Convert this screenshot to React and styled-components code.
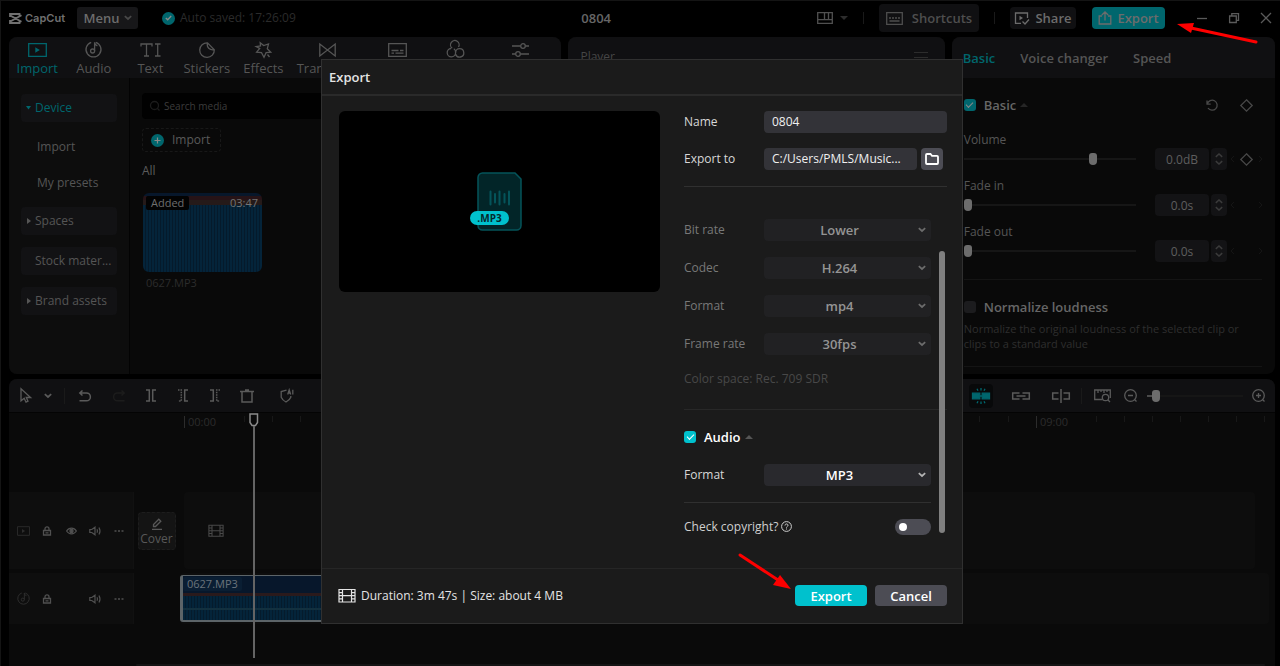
import React from "react";
import styled, { createGlobalStyle, css } from "styled-components";

const Global = createGlobalStyle`
  *, *::before, *::after { box-sizing: border-box; }
  html, body { margin: 0; background: #000; }
  body, button, input, select {
    font-family: "Open Sans", "Noto Sans", sans-serif;
    font-size: 12px;
    line-height: 18px;
  }
  button, input, select { margin: 0; border: 0; padding: 0; background: none; color: inherit; outline: none; }
  button { white-space: nowrap; }
  h1, h2, p { margin: 0; font-size: 13px; font-weight: 600; }
`;

const strong = css`
  font-size: 13px;
  font-weight: 600;
`;

const teal = "#00c1cd";
const dimTeal = "#00666d";
const dim = "#5c5c5c";

const Svg = styled.svg`
  display: block;
  flex: none;
  fill: none;
  stroke: currentColor;
  stroke-width: ${(p) => p.$weight || 1.3};
  overflow: visible;
`;
const Icon = ({ w = 16, h = 16, weight, children }) => (
  <Svg width={w} height={h} viewBox={`0 0 ${w} ${h}`} $weight={weight} aria-hidden="true">
    {children}
  </Svg>
);

/* ---------- icons ---------- */
const ChevronDown = () => (
  <Icon w={8} h={6} weight={1.7}><path d="M.8 1.200 4 4l3.200-2.800" /></Icon>
);
const CaretUp = () => (
  <Icon w={8} h={4}><path d="M0 4 4 0l4 4z" fill="currentColor" stroke="none" /></Icon>
);
const CaretDown = () => (
  <Icon w={8} h={4}><path d="M0 0h8L4 4z" fill="currentColor" stroke="none" /></Icon>
);
const Film = ({ w = 16, h = 13 }) => (
  <Svg width={w} height={h} viewBox="0 0 18 14" $weight={1.2} aria-hidden="true">
    <path d="M1 1h16v12.500H1zM4.500 1v12.500M13.500 1v12.500M4.500 7.200h9M1 4.100h3.500M1 7.200h3.500M1 10.300h3.500M13.500 4.100H17M13.500 7.200H17M13.500 10.300H17" />
  </Svg>
);
const Lock = () => (
  <Icon w={10} h={10}><path d="M1.500 4.500h7v4.500h-7zM3 4.500V2.800a2 2 0 0 1 4 0v1.700M3.500 6.800h3" /></Icon>
);
const Eye = () => (
  <Icon w={11} h={10} weight={1.2}><path d="M.6 5C3 1.200 8 1.200 10.400 5 8 8.800 3 8.800.6 5z" /><circle cx="5.500" cy="5" r="1.600" fill="currentColor" /></Icon>
);
const Speaker = () => (
  <Icon w={12} h={10} weight={1.2}><path d="M.8 3.500h2L6 1.200v7.600L2.800 6.500h-2zM8 3.200q1 1.800 0 3.600M10 1.500q2 3.500 0 7" /></Icon>
);
const Dots = () => (
  <Icon w={10} h={10}><path d="M.5 4.300h2v1.400h-2zM4 4.300h2v1.400H4zM7.500 4.300h2v1.400h-2z" fill="currentColor" stroke="none" /></Icon>
);
const Note = ({ size = 17 }) => (
  <Svg width={size} height={size} viewBox="0 0 17 17" $weight={1.3} aria-hidden="true">
    <path d="M10.800 1.300A7.500 7.500 0 1 1 6.200 1.300" /><circle cx="7.600" cy="10" r="2" /><path d="M9.600 10V1.200c0 2 1 3 2.800 3.600" />
  </Svg>
);
const PlayBox = ({ w = 19, h = 14 }) => (
  <Svg width={w} height={h} viewBox="0 0 19 14" $weight={1.3} aria-hidden="true">
    <path d="M.7.700h17.600v12.600H.7z" /><path d="M7.300 4.200v5.600l4.500-2.800z" fill="currentColor" stroke="none" />
  </Svg>
);
const Diamond = () => <Icon w={13} h={13}><path d="m6.500.8 5.700 5.700-5.700 5.700L.8 6.500z" /></Icon>;

/* ---------- frame ---------- */
const Page = styled.div`
  position: relative;
  display: flex;
  flex-direction: column;
  min-height: 100vh;
  padding: 0 5px 0 8px;
  border-top: 1px solid #141414;
  border-left: 1px solid #141414;
  background: #000;
  color: ${dim};
`;
const Header = styled.header`
  display: flex;
  align-items: center;
  height: 36px;
  padding: 0 4px 2px 0;
`;
const HeaderStart = styled.div`
  display: flex;
  flex: 1;
  align-items: center;
`;
const Logo = styled.div`
  display: flex;
  align-items: center;
  gap: 3px;
  width: 68px;
  font: 600 11px/14px "Inter", sans-serif;
  color: #707070;
`;
const MenuButton = styled.button`
  display: flex;
  align-items: center;
  justify-content: center;
  gap: 4px;
  width: 61px;
  height: 22px;
  border-radius: 3px;
  background: #171719;
  color: #6c6c6c;
  ${strong}
  svg { color: #484848; }
`;
const Saved = styled.div`
  display: flex;
  align-items: center;
  gap: 5px;
  margin-left: 24px;
  color: #2b2b2b;
  white-space: nowrap;
`;
const Round = styled.span`
  display: grid;
  flex: none;
  place-items: center;
  width: 13px;
  height: 13px;
  border-radius: 50%;
  background: ${dimTeal};
  color: #8a8a8a;
`;
const ProjectTitle = styled.h1`
  margin-right: 206px;
  color: #666;
`;
const HeaderEnd = styled.div`
  display: flex;
  align-items: center;
`;
const LayoutButton = styled.button`
  display: flex;
  align-items: center;
  gap: 7px;
  color: #505050;
  svg + svg { color: #2c2c2c; }
`;
const Rule = styled.span`
  width: 1px;
  height: ${(p) => p.$tall || 12}px;
  margin: 0 ${(p) => p.$gap || 15}px;
  background: #1a1a1a;
`;
const HeadButton = styled.button`
  display: flex;
  align-items: center;
  justify-content: center;
  gap: ${(p) => p.$gap || 5}px;
  width: ${(p) => p.$width}px;
  height: ${(p) => (p.$large ? 28 : 22)}px;
  border-radius: 4px;
  background: ${(p) => (p.$primary ? dimTeal : "#101012")};
  color: ${(p) => (p.$large ? "#4e4e4e" : "#6c6c6c")};
  ${strong}
  & + & { margin-left: 16px; }
`;
const WindowControls = styled.div`
  display: flex;
  align-items: center;
  gap: 22px;
  margin-left: 32px;
  color: #5a5a5a;
  button { display: grid; }
`;

/* ---------- panels ---------- */
const Workspace = styled.main`
  display: grid;
  grid-template-columns: 552fr 376fr 323fr;
  gap: 7px;
  height: 337px;
`;
const Panel = styled.section`
  display: flex;
  flex-direction: column;
  min-width: 0;
  border-radius: 8px;
  background: #090909;
  overflow: hidden;
`;
const TabBar = styled.nav`
  display: flex;
  height: 41px;
  padding-right: 5px;
  background: #101012;
`;
const Tool = styled.button`
  display: flex;
  flex-direction: column;
  flex: ${(p) => p.$grow || 57} 1 0;
  align-items: ${(p) => (p.$start ? "flex-start" : "center")};
  justify-content: space-between;
  min-width: 0;
  padding: 4px 0 1px ${(p) => (p.$start ? 5 : 0)}px;
  font-size: 13px;
  color: ${(p) => (p.$active ? dimTeal : "#555")};
`;
const ToolIcon = styled.span`
  display: grid;
  place-items: center;
  min-width: ${(p) => (p.$wide ? 62 : 0)}px;
  height: 17px;
`;
const MediaBody = styled.div`
  display: flex;
  flex: 1;
`;
const Sidebar = styled.aside`
  width: 121px;
  padding: 16px 12px;
  border-right: 1px solid #030303;
  background: #0d0d0d;
`;
const Group = styled.button`
  display: flex;
  align-items: center;
  gap: 4px;
  width: 96px;
  height: 28px;
  padding: 0 5px;
  border-radius: 4px;
  background: #121214;
  color: ${(p) => (p.$active ? dimTeal : "#555")};
  & + & { margin-top: 12px; }
`;
const GroupMark = styled.span`
  display: grid;
  flex: none;
  place-items: center;
  width: 5px;
`;
const SubItems = styled.div`
  padding: 7px 0 6px;
`;
const SubItem = styled.button`
  display: block;
  height: 36px;
  padding-left: 16px;
  color: #555;
`;
const Library = styled.div`
  flex: 1;
  padding: 15px 12px;
`;
const Search = styled.label`
  display: flex;
  align-items: center;
  gap: 4px;
  height: 26px;
  padding: 0 8px;
  border-radius: 4px;
  background: #010101;
  color: #1c1c1c;
  input { flex: 1; font-size: 10px; }
  input::placeholder { color: #3c3c3c; opacity: 1; }
`;
const ImportButton = styled.button`
  display: flex;
  align-items: center;
  gap: 8px;
  width: 79px;
  height: 24px;
  margin: 9px 0 10px;
  padding: 0 8px;
  border: 1px dashed #181818;
  border-radius: 4px;
  color: #5a5a5a;
`;
const Thumb = styled.div`
  display: flex;
  align-items: flex-start;
  justify-content: space-between;
  width: 119px;
  height: 79px;
  margin: 13px 0 2px 1px;
  padding: 3px 4px 0 3px;
  border-radius: 6px;
  background:
    linear-gradient(#07172b 3px, #261317 3px, #261317 7px, #251a19 7px, #251a19 12px, transparent 12px),
    repeating-linear-gradient(90deg, #04243a 0 2px, #051a2b 2px 3px);
  font-size: 11px;
  line-height: 14px;
  color: #747474;
`;
const Added = styled.span`
  padding: 0 5px;
  border-radius: 2px;
  background: #030303;
  color: #6e6e6e;
`;
const FileName = styled.p`
  padding-left: 4px;
  font-size: 11px;
  font-weight: 400;
  color: #2c2c2c;
`;
const PlayerHead = styled.div`
  display: flex;
  align-items: center;
  justify-content: space-between;
  height: 40px;
  padding: 0 17px 0 12px;
  background: #101012;
  color: #464646;
  svg { color: #2c2c2c; }
`;

/* ---------- inspector ---------- */
const InspectorTabs = styled(TabBar)`
  align-items: center;
  gap: 25px;
  padding: 0 11px;
`;
const InspectorTab = styled.button`
  ${strong}
  color: ${(p) => (p.$active ? dimTeal : "#555")};
`;
const InspectorBody = styled.div`
  padding: 18px 13px 0 12px;
`;
const CheckRow = styled.div`
  display: flex;
  align-items: center;
  height: 18px;
  color: ${(p) => (p.$bright ? "#fff" : "#666")};
`;
const CheckLabel = styled.label`
  display: flex;
  align-items: center;
  gap: 8px;
  ${strong}
`;
const Check = styled.input`
  display: grid;
  place-items: center;
  width: 12px;
  height: 12px;
  border-radius: 3px;
  background: #1c1c1e;
  appearance: none;
  &:checked { background: ${(p) => (p.$bright ? teal : dimTeal)}; }
  &:checked::after {
    content: "";
    width: 7px;
    height: 4px;
    margin-top: -2px;
    border: solid ${(p) => (p.$bright ? "#fff" : "#888")};
    border-width: 0 0 1px 1px;
    transform: rotate(-45deg);
  }
`;
const Collapse = styled.button`
  display: grid;
  margin-left: 4px;
  color: ${(p) => (p.$bright ? "#555" : "#262626")};
`;
const RowEnd = styled.div`
  display: flex;
  align-items: center;
  gap: 22px;
  margin: 0 9px 0 auto;
  color: #484848;
`;
const KeySet = styled.div`
  display: flex;
  align-items: center;
  justify-content: center;
  gap: 6px;
  width: 31px;
  color: #151515;
  button { display: grid; width: 13px; color: #484848; }
`;
const Field = styled.div`
  padding-top: ${(p) => (p.$first ? 17 : 8)}px;
  color: #555;
`;
const FieldRow = styled.div`
  display: flex;
  align-items: center;
  height: 20px;
`;
const Range = styled.input`
  flex: 1;
  min-width: 0;
  height: 12px;
  appearance: none;
  background: linear-gradient(#161616, #161616) center / 100% 2px no-repeat;
  &::-webkit-slider-thumb {
    width: 8px;
    height: 12px;
    border-radius: 3px 3px 4px 4px;
    background: #6c6c6c;
    appearance: none;
  }
`;
const Value = styled.input`
  width: 54px;
  height: 22px;
  margin: 0 2px 0 19px;
  border-radius: 4px;
  background: #131315;
  text-align: center;
  color: #5e5e5e;
`;
const Stepper = styled.button`
  display: grid;
  place-items: center;
  width: 16px;
  height: 22px;
  margin-right: 4px;
  border-radius: 4px;
  background: #131315;
  color: #3a3a3a;
`;
const Divider = styled.hr`
  height: 1px;
  margin: ${(p) => p.$space};
  border: 0;
  background: ${(p) => p.$color || "#141414"};
`;
const Hint = styled.p`
  margin-top: 5px;
  font-size: 11px;
  font-weight: 400;
  line-height: 15px;
  color: #2e2e2e;
`;

/* ---------- timeline ---------- */
const Timeline = styled.section`
  position: relative;
  display: flex;
  flex: 1;
  flex-direction: column;
  margin-top: 5px;
  border-radius: 8px 8px 0 0;
  background: #0a0a0a;
  overflow: hidden;
`;
const Toolbar = styled.div`
  display: flex;
  align-items: center;
  justify-content: space-between;
  height: 34px;
  padding: 0 8px 0 9px;
  border-bottom: 1px solid #040404;
  background: #101012;
`;
const Tools = styled.div`
  display: flex;
  align-items: center;
  color: #5a5a5a;
`;
const ToolButton = styled.button`
  display: grid;
  place-items: center;
  width: ${(p) => p.$width || 32}px;
  height: 24px;
  border-radius: 4px;
  background: ${(p) => (p.$active ? "#08090a" : "none")};
  color: ${(p) => (p.$active ? dimTeal : p.$off ? "#1c1c1c" : "inherit")};
`;
const ZoomRange = styled(Range)`
  flex: none;
  width: 96px;
  margin: 0 6px 0 0;
  background: linear-gradient(90deg, #4a4a4a 6px, #161616 6px) center / 100% 2px no-repeat;
`;
const Ruler = styled.div`
  display: flex;
  height: 79px;
  padding: 3px 0 0 175px;
  overflow: hidden;
`;
const Major = styled.div`
  display: grid;
  flex: none;
  grid-template-columns: repeat(10, 1fr);
  width: 284px;
  font-size: 11px;
  line-height: 12px;
  color: #2c2c2c;
`;
const Tick = styled.span`
  height: ${(p) => (p.$label ? 12 : 6)}px;
  padding-left: 3px;
  border-left: 1px solid ${(p) => (p.$hidden ? "transparent" : p.$label ? "#2c2c2c" : "#181818")};
  white-space: nowrap;
`;
const Track = styled.div`
  display: flex;
  height: ${(p) => p.$height}px;
  margin-bottom: 4px;
`;
const TrackHead = styled.div`
  display: grid;
  grid-template-columns: repeat(5, 24px);
  align-items: center;
  justify-items: center;
  width: 125px;
  padding-left: 2px;
  border-right: 1px solid #111;
  background: #0e0e0e;
  color: #505050;
  button { display: grid; }
`;
const TrackKind = styled.span`
  color: #2d2d2d;
`;
const TrackGap = styled.div`
  display: grid;
  place-items: center;
  width: ${(p) => p.$width}px;
  padding-right: 5px;
`;
const Cover = styled.button`
  display: flex;
  flex-direction: column;
  align-items: center;
  width: 38px;
  height: 38px;
  padding-top: 5px;
  border: 1px dashed #1d1d1d;
  border-radius: 4px;
  background: #141414;
  color: #585858;
`;
const Lane = styled.div`
  display: flex;
  flex: 1;
  align-items: center;
  margin-right: ${(p) => p.$inset}px;
  padding-left: ${(p) => p.$pad || 0}px;
  border-radius: 4px;
  background: #0d0d0d;
  color: #484848;
`;
const Clip = styled.div`
  width: 361px;
  height: 47px;
  padding-top: 1px;
  border: 1px solid #5c6468;
  border-width: 1px 1px 2px 3px;
  border-radius: 3px;
  background:
    linear-gradient(#07172b 17px, #2a1a1c 17px, #2a1a1c 20px, transparent 20px, transparent 32px, #12303f 32px, #12303f 34px, transparent 34px),
    repeating-linear-gradient(90deg, #04243a 0 2px, #051b2c 2px 3px);
`;
const ClipName = styled.span`
  display: inline-block;
  padding: 0 4px;
  border-radius: 2px;
  background: #0a1e33;
  font-size: 11px;
  line-height: 14px;
  color: #6a747c;
  vertical-align: top;
`;
const Playhead = styled.div`
  position: absolute;
  top: 34px;
  bottom: 8px;
  left: 240px;
  width: 9px;
  color: #8a8a8a;
  &::after {
    content: "";
    position: absolute;
    top: 13px;
    bottom: 0;
    left: 4px;
    width: 2px;
    background: #646464;
  }
`;
const ScrollTrack = styled.div`
  height: 2px;
  margin: auto 10px 0 127px;
  border-radius: 2px;
  background: #141414;
`;

/* ---------- dialog ---------- */
const Overlay = styled.div`
  position: fixed;
  inset: 0;
  display: grid;
  place-items: center;
  padding: 16px 0 0 4px;
`;
const Dialog = styled.div`
  width: min(642px, 100%);
  border: 1px solid #303030;
  background: #1b1b1b;
  color: #e4e4e4;
`;
const DialogHead = styled.header`
  height: 36px;
  padding: 8px 7px;
  border-bottom: 2px solid #2a2a2a;
`;
const DialogBody = styled.div`
  display: flex;
  gap: 24px;
  padding: 15px 15px 0 17px;
`;
const Preview = styled.div`
  display: grid;
  flex: none;
  place-items: center;
  width: 321px;
  height: 181px;
  border-radius: 6px;
  background: #000;
`;
const FileArt = styled.div`
  position: relative;
  color: #04545a;
`;
const FileTag = styled.span`
  position: absolute;
  bottom: 6px;
  left: -7px;
  width: 39px;
  height: 14px;
  border-radius: 7px;
  background: ${teal};
  font: 700 10px/14px "Open Sans", sans-serif;
  text-align: center;
  color: #042a2d;
`;
const Form = styled.form`
  flex: 1;
  min-width: 0;
`;
const FormRow = styled.div`
  display: grid;
  grid-template-columns: 80px 1fr auto;
  align-items: center;
  height: 22px;
  margin-bottom: ${(p) => (p.$tight ? 15 : 16)}px;
  color: ${(p) => (p.$dim ? "#787878" : "#d8d8d8")};
`;
const TextBox = styled.input`
  min-width: 0;
  width: 100%;
  height: 22px;
  padding: 0 8px;
  border-radius: 4px;
  background: #333338;
  text-overflow: ellipsis;
  color: #f0f0f0;
`;
const FolderButton = styled.button`
  display: grid;
  place-items: center;
  width: 22px;
  height: 22px;
  margin: 0 4px;
  border-radius: 4px;
  background: #4c4c54;
  color: #fff;
`;
const Settings = styled.div`
  position: relative;
  height: 381px;
  padding: 32px 16px 0 0;
`;
const SelectWrap = styled.div`
  position: relative;
  grid-column: 2 / 4;
  select {
    display: block;
    width: 100%;
    height: 22px;
    padding-right: 16px;
    border-radius: 4px;
    background: ${(p) => (p.$dim ? "#212123" : "#29292d")};
    text-align-last: center;
    color: ${(p) => (p.$dim ? "#949494" : "#fff")};
    opacity: 1;
    appearance: none;
    ${strong}
  }
  svg {
    position: absolute;
    top: 8px;
    right: 5px;
    color: ${(p) => (p.$dim ? "#6c6c6c" : "#b4b4b4")};
    pointer-events: none;
  }
`;
const ColorSpace = styled.p`
  margin-top: -1px;
  font-size: 12px;
  font-weight: 400;
  color: #484848;
`;
const CopyrightRow = styled.div`
  display: flex;
  align-items: center;
  gap: 3px;
  height: 18px;
  color: #cfcfcf;
`;
const Toggle = styled.input`
  width: 36px;
  height: 16px;
  margin-left: auto;
  padding: 4px;
  border-radius: 8px;
  background: #4c4c54;
  appearance: none;
  &::after {
    content: "";
    display: block;
    width: 8px;
    height: 8px;
    border-radius: 50%;
    background: #fff;
  }
`;
const ScrollThumb = styled.span`
  position: absolute;
  top: 64px;
  right: 2px;
  width: 6px;
  height: 282px;
  border-radius: 3px;
  background: #808080;
`;
const DialogFoot = styled.footer`
  display: flex;
  align-items: center;
  gap: 5px;
  height: 55px;
  padding: 0 15px 0 16px;
  border-top: 1px solid #262626;
`;
const Action = styled.button`
  width: 72px;
  height: 21px;
  border-radius: 4px;
  background: ${(p) => (p.$primary ? teal : "#4c4c54")};
  color: #fff;
  ${strong}
  & + & { margin-left: 8px; }
`;
const Summary = styled.span`
  flex: 1;
`;
const Pointer = styled.svg`
  position: absolute;
  top: ${(p) => p.$top}px;
  right: ${(p) => p.$right}px;
  stroke: #fe0000;
  stroke-width: 3;
  stroke-linecap: round;
  fill: #fe0000;
  pointer-events: none;
`;
const ActionArea = styled.div`
  position: relative;
  display: flex;
`;

function LevelField({ id, label, value, position, first }) {
  return (
    <Field $first={first}>
      <label htmlFor={id}>{label}</label>
      <FieldRow>
        <Range id={id} type="range" min="0" max="100" defaultValue={position} />
        <Value aria-label={`${label} value`} defaultValue={value} />
        <Stepper type="button" aria-label={`Adjust ${label}`}>
          <Icon w={8} h={12} weight={1.6}><path d="M.8 3.800 4 1l3.200 2.800M.8 8.200 4 11l3.200-2.800" /></Icon>
        </Stepper>
        <KeySet>
          <span><Icon w={3} h={6} weight={1}><path d="M3 0 0 3l3 3" /></Icon></span>
          {first ? <button type="button" aria-label="Keyframe"><Diamond /></button> : <button type="button" aria-label="No keyframe" />}
          <span><Icon w={3} h={6} weight={1}><path d="m0 0 3 3-3 3" /></Icon></span>
        </KeySet>
      </FieldRow>
    </Field>
  );
}

function Choice({ id, label, value, dim: isDim }) {
  return (
    <FormRow $dim={isDim}>
      <label htmlFor={id}>{label}</label>
      <SelectWrap $dim={isDim}>
        <select id={id} defaultValue={value}><option>{value}</option></select>
        <ChevronDown />
      </SelectWrap>
    </FormRow>
  );
}

function MajorTicks({ label }) {
  return (
    <Major>
      {Array.from({ length: 10 }, (_, i) => (
        <Tick key={i} $label={i === 0} $hidden={i === 1}>{i === 0 ? label : null}</Tick>
      ))}
    </Major>
  );
}

const tools = [
  ["Import", 57, <PlayBox />],
  ["Audio", 57, <Note />],
  ["Text", 57, <Icon w={21} h={14}><path d="M1 3.500V1h11v2.500M6.500 1v12M4 13h5M15 1h5.500M15 13h5.500M17.700 1v12" /></Icon>],
  ["Stickers", 57, <Icon w={16} h={16}><path d="M8.500.8a7.300 7.300 0 1 0 6.800 6.900zM8.500.8c-1 4.500 2 7.700 6.800 6.900" /></Icon>],
  ["Effects", 57, <Icon w={17} h={16}><path d="m5.200.8 3.500 2.800L13.500 2l-1.200 4.700 3.500 3.500-4.700.5L9 15.200l-2.500-4.500-4.900-.5 3.100-3.700L1.200 4.600l4.300-.6zM12.500 12.500l2 2.500" /></Icon>],
  ["Tran", 73, <Icon w={17} h={14}><path d="M.8 1v12L16.200 1v12z" /></Icon>, "Transitions"],
  ["", 57, <Icon w={19} h={14}><path d="M.7.700h17.600v12.600H.7zM3.500 7.500h7M12 7.500h3.500M3.500 10.200h2.500M7.500 10.200h8" /></Icon>, "Captions"],
  ["", 60, <Icon w={18} h={17}><path d="M6.200 7.200A4.300 4.300 0 1 1 12.500 6M5 7.500a4.200 4.200 0 1 0 4.600 4.200c0-2 1.300-4 4-4a4.200 4.200 0 1 1-4 5.500M9.600 11.700c.2-2-.5-3.200-1.800-3.900" /></Icon>, "Filters"],
  ["", 72, <Icon w={17} h={14}><path d="M0 3h8.500M13.500 3H17M0 11h3.500M8.500 11H17" /><circle cx="11" cy="3" r="2.300" /><circle cx="6" cy="11" r="2.300" /></Icon>, "Adjustment"],
];

export default function App() {
  return (
    <>
      <Global />
      <Page>
        <Header>
          <HeaderStart>
            <Logo>
              <Icon w={13} h={11} weight={1.8}><path d="M12.500 2.200 2 8H1V10h9.500V7.800M12.500 8.800 2 3H1V1h9.500v2.200" /></Icon>
              CapCut
            </Logo>
            <MenuButton type="button">Menu <ChevronDown /></MenuButton>
            <Saved>
              <Round><Icon w={7} h={6}><path d="m.8 3 1.900 1.800L6.200 1" /></Icon></Round>
              Auto saved: 17:26:09
            </Saved>
          </HeaderStart>
          <ProjectTitle>0804</ProjectTitle>
          <HeaderEnd>
            <LayoutButton type="button" aria-label="Layout">
              <Icon w={16} h={12}><path d="M.7.700h14.600v10.600H.7zM.7 7.700h14.600M7.500.7v7M11.500.7v7" /></Icon>
              <CaretDown />
            </LayoutButton>
            <Rule />
            <HeadButton type="button" $large $width={100} $gap={9}>
              <Icon w={17} h={13}><path d="M.7.700h15.600v11.600H.7zM3 6h2M6 6h2M9 6h2M12 6h2M3.500 9h10" /></Icon>
              Shortcuts
            </HeadButton>
            <Rule />
            <HeadButton type="button" $width={66}>
              <Icon w={16} h={13}><path d="M7 11.300H1.500V1h12v5M8.500 9.500l2.500 2.500 4-4.500" /><path d="M5.500 3.700v4.600L9 6z" fill="currentColor" stroke="none" /></Icon>
              Share
            </HeadButton>
            <HeadButton type="button" $primary $width={73}>
              <Icon w={14} h={14}><path d="M4 5H1.200v8h11.600V5H10M7 9.500V1.200M3.800 4 7 1l3.200 3" /></Icon>
              Export
            </HeadButton>
            <WindowControls>
              <button type="button" aria-label="Minimize"><Icon w={10} h={10}><path d="M0 5.500h10" /></Icon></button>
              <button type="button" aria-label="Restore"><Icon w={10} h={10}><path d="M.6 3h6.700v6.500H.6zM2.800 3V.6h6.700v6.700H7.300" /></Icon></button>
              <button type="button" aria-label="Close"><Icon w={10} h={10}><path d="m0 0 10 10M10 0 0 10" /></Icon></button>
            </WindowControls>
          </HeaderEnd>
        </Header>

        <Workspace>
          <Panel>
            <TabBar>
              {tools.map(([label, grow, icon, name], i) => (
                <Tool key={i} type="button" $grow={grow} $active={i === 0} $start={i === 5} aria-label={name}>
                  <ToolIcon $wide={i === 5}>{icon}</ToolIcon>
                  {label}
                </Tool>
              ))}
            </TabBar>
            <MediaBody>
              <Sidebar>
                <Group type="button" $active>
                  <GroupMark><Icon w={5} h={4}><path d="M0 0h5L2.500 3.500z" fill="currentColor" stroke="none" /></Icon></GroupMark>
                  Device
                </Group>
                <SubItems>
                  <SubItem type="button">Import</SubItem>
                  <SubItem type="button">My presets</SubItem>
                </SubItems>
                {[["Spaces", true], ["Stock mater...", false], ["Brand assets", true]].map(([label, marked]) => (
                  <Group key={label} type="button">
                    <GroupMark>
                      {marked && <Icon w={4} h={6}><path d="M0 0v6l4-3z" fill="currentColor" stroke="none" /></Icon>}
                    </GroupMark>
                    {label}
                  </Group>
                ))}
              </Sidebar>
              <Library>
                <Search>
                  <Icon w={10} h={10}><circle cx="4.500" cy="4.500" r="4" /><path d="m7.500 7.500 2 2" /></Icon>
                  <input type="search" placeholder="Search media" aria-label="Search media" />
                </Search>
                <ImportButton type="button">
                  <Round><Icon w={7} h={7} weight={1.2}><path d="M3.500.5v6M.5 3.500h6" /></Icon></Round>
                  Import
                </ImportButton>
                <div>All</div>
                <Thumb><Added>Added</Added><span>03:47</span></Thumb>
                <FileName>0627.MP3</FileName>
              </Library>
            </MediaBody>
          </Panel>

          <Panel>
            <PlayerHead>
              Player
              <Icon w={14} h={11} weight={1}><path d="M0 .5h14M0 5.500h14M0 10.500h14" /></Icon>
            </PlayerHead>
          </Panel>

          <Panel>
            <InspectorTabs>
              <InspectorTab type="button" $active>Basic</InspectorTab>
              <InspectorTab type="button">Voice changer</InspectorTab>
              <InspectorTab type="button">Speed</InspectorTab>
            </InspectorTabs>
            <InspectorBody>
              <CheckRow>
                <CheckLabel><Check type="checkbox" defaultChecked />Basic</CheckLabel>
                <Collapse type="button" aria-label="Collapse Basic"><CaretUp /></Collapse>
                <RowEnd>
                  <Icon w={12} h={12}><path d="M1 1.500v3.700h3.700M1.300 5A5 5 0 1 1 2 9" /></Icon>
                  <Diamond />
                </RowEnd>
              </CheckRow>
              <LevelField id="volume" label="Volume" value="0.0dB" position={76} first />
              <LevelField id="fade-in" label="Fade in" value="0.0s" position={0} />
              <LevelField id="fade-out" label="Fade out" value="0.0s" position={0} />
              <Divider $space="18px 0" />
              <CheckRow>
                <CheckLabel><Check type="checkbox" />Normalize loudness</CheckLabel>
              </CheckRow>
              <Hint>Normalize the original loudness of the selected clip or clips to a standard value</Hint>
              <Divider $space="15px 0 0" />
            </InspectorBody>
          </Panel>
        </Workspace>

        <Timeline>
          <Toolbar>
            <Tools>
              <ToolButton $width={16} type="button" aria-label="Select"><Icon w={12} h={15}><path d="M1 .8v12l3.200-2.600 1.800 4 2-1-1.700-3.700h4.300z" /></Icon></ToolButton>
              <ToolButton $width={28} type="button" aria-label="Select mode"><ChevronDown /></ToolButton>
              <Rule $tall={16} $gap={2} />
              <ToolButton $width={36} type="button" aria-label="Undo"><Icon w={12} h={12} weight={1.5}><path d="M3.500.5.800 3 3.500 5.500M1 3h6.500a3.900 3.900 0 0 1 0 7.800H.5" /></Icon></ToolButton>
              <ToolButton type="button" $off aria-label="Redo"><Icon w={12} h={12} weight={1.5}><path d="M8.500.5 11.200 3 8.500 5.500M11 3H4.500a3.900 3.900 0 0 0 0 7.800h7" /></Icon></ToolButton>
              <ToolButton type="button" aria-label="Split"><Icon w={10} h={13} weight={1.5}><path d="M0 1h3.300v11H0M10 1H6.700v11H10" /></Icon></ToolButton>
              <ToolButton type="button" aria-label="Delete left"><Icon w={10} h={13} weight={1.5}><path d="M0 1h3.300v11H0" strokeDasharray="1.500 1" /><path d="M10 1H6.700v11H10" /></Icon></ToolButton>
              <ToolButton type="button" aria-label="Delete right"><Icon w={10} h={13} weight={1.5}><path d="M0 1h3.300v11H0" /><path d="M10 1H6.700v11H10" strokeDasharray="1.500 1" /></Icon></ToolButton>
              <ToolButton type="button" aria-label="Delete"><Icon w={14} h={14} weight={1.5}><path d="M0 2.500h14M5 1h4M2 2.500V13h10V2.500" /></Icon></ToolButton>
              <ToolButton $width={48} type="button" aria-label="AI shield"><Icon w={14} h={14}><path d="M6.500 1.200 1.200 2.500v5.700q1.300 3 4.800 4.800 3.800-2 4.800-4.800V7M7.700 5.500l1.500-4.700 1.500 4.700M8.300 4h1.900M12.800.8v4.700" /></Icon></ToolButton>
            </Tools>
            <Tools>
              <ToolButton $width={24} $active type="button" aria-label="Magnet">
                <Icon w={18} h={16}><path d="M.5 5.200h7.300v5.600H.5zM10.200 5.200h7.300v5.600h-7.300z" fill="currentColor" /><path d="M9 0v2.500M5 .8l1 2M13 .8l-1 2M9 13.500V16M5 15.200l1-2M13 15.200l-1-2M8 8h2" /></Icon>
              </ToolButton>
              <ToolButton $width={56} type="button" aria-label="Link"><Icon w={18} h={8} weight={1.5}><path d="M7.500 1H.7v6h6.800M10.500 1h6.800v6h-6.800M4.500 4h9" /></Icon></ToolButton>
              <ToolButton $width={24} type="button" aria-label="Preview axis"><Icon w={18} h={14} weight={1.5}><path d="M6.500 4H.7v6h5.800M11.500 4h5.800v6h-5.800M9 0v14" /></Icon></ToolButton>
              <Rule $tall={16} $gap={8} />
              <ToolButton $width={24} type="button" aria-label="Fit timeline"><Icon w={17} h={14}><path d="M8 10.500H.7V1h15.600v8M4 1v3M7 1v2M10 1v3M13 1v2" /><circle cx="11.500" cy="8.500" r="3.200" /><path d="m14 11 2 2" /></Icon></ToolButton>
              <ToolButton $width={33} type="button" aria-label="Zoom out"><Icon w={13} h={13}><circle cx="6.500" cy="6.500" r="5.800" /><path d="M4 6.500h5M10.500 10.500l2 2" /></Icon></ToolButton>
              <ZoomRange type="range" aria-label="Timeline zoom" min="0" max="100" defaultValue="6" />
              <ToolButton $width={18} type="button" aria-label="Zoom in"><Icon w={13} h={13}><circle cx="6.500" cy="6.500" r="5.800" /><path d="M4 6.500h5M6.500 4v5M10.500 10.500l2 2" /></Icon></ToolButton>
            </Tools>
          </Toolbar>
          <Ruler>
            <MajorTicks label="00:00" />
            <MajorTicks />
            <MajorTicks />
            <MajorTicks label="09:00" />
          </Ruler>
          <Track $height={77}>
            <TrackHead>
              <TrackKind><PlayBox w={13} h={10} /></TrackKind>
              <button type="button" aria-label="Lock video"><Lock /></button>
              <button type="button" aria-label="Hide video"><Eye /></button>
              <button type="button" aria-label="Mute video"><Speaker /></button>
              <button type="button" aria-label="More for video"><Dots /></button>
            </TrackHead>
            <TrackGap $width={50}>
              <Cover type="button">
                <Icon w={10} h={12}><path d="M0 11.400h10M1.500 8.500V6.500L6.800 1.200 8.800 3.200 3.500 8.500z" /></Icon>
                Cover
              </Cover>
            </TrackGap>
            <Lane $inset={20} $pad={24}><Film /></Lane>
          </Track>
          <Track $height={51}>
            <TrackHead>
              <TrackKind><Note size={13} /></TrackKind>
              <button type="button" aria-label="Lock audio"><Lock /></button>
              <span />
              <button type="button" aria-label="Mute audio"><Speaker /></button>
              <button type="button" aria-label="More for audio"><Dots /></button>
            </TrackHead>
            <TrackGap $width={46} />
            <Lane $inset={6}><Clip><ClipName>0627.MP3</ClipName></Clip></Lane>
          </Track>
          <ScrollTrack />
          <Playhead><Icon w={9} h={14} weight={1.5}><path d="M1 1h7.500v8.500l-2 3h-3.500l-2-3z" /></Icon></Playhead>
        </Timeline>
        <Pointer $top={22} $right={22} width="82" height="24" viewBox="0 0 82 24">
          <path d="M80 19 15 5" /><path d="M1 1 18 0 15 10z" stroke="none" />
        </Pointer>
      </Page>

      <Overlay>
        <Dialog role="dialog" aria-labelledby="export-title">
          <DialogHead><h2 id="export-title">Export</h2></DialogHead>
          <DialogBody>
            <Preview>
              <FileArt>
                <Icon w={45} h={59} weight={1.5}>
                  <path d="M5.500 1H38l6 6v46.500a4.500 4.500 0 0 1-4.500 4.500h-34A4.500 4.500 0 0 1 1 53.500v-48A4.500 4.500 0 0 1 5.500 1z" fill="#022528" />
                  <path d="M13.500 19.500v13M18 22v8.500M22.500 19.500v13M27.500 22v8.500M32 19.500v13" strokeWidth="2" strokeLinecap="round" />
                </Icon>
                <FileTag>.MP3</FileTag>
              </FileArt>
            </Preview>
            <Form>
              <FormRow $tight>
                <label htmlFor="name">Name</label>
                <TextBox id="name" defaultValue="0804" />
              </FormRow>
              <FormRow>
                <label htmlFor="path">Export to</label>
                <TextBox id="path" defaultValue="C:/Users/PMLS/Music..." />
                <FolderButton type="button" aria-label="Choose folder">
                  <Icon w={14} h={12} weight={1.8}><path d="M1 10V2q0-1 1-1h3.500L7 2.800h5q1 0 1 1V10q0 1-1 1H2q-1 0-1-1z" /></Icon>
                </FolderButton>
              </FormRow>
              <Divider $space="0" $color="#303030" />
              <Settings>
                <Choice dim id="bitrate" label="Bit rate" value="Lower" />
                <Choice dim id="codec" label="Codec" value="H.264" />
                <Choice dim id="video-format" label="Format" value="mp4" />
                <Choice dim id="frame-rate" label="Frame rate" value="30fps" />
                <ColorSpace>Color space: Rec. 709 SDR</ColorSpace>
                <Divider $space="21px -16px 18px 0" $color="#282828" />
                <CheckRow $bright>
                  <CheckLabel><Check $bright type="checkbox" defaultChecked />Audio</CheckLabel>
                  <Collapse $bright type="button" aria-label="Collapse Audio"><CaretUp /></Collapse>
                </CheckRow>
                <Divider $space="0 0 17px" $color="transparent" />
                <Choice id="audio-format" label="Format" value="MP3" />
                <Divider $space="0 0 15px" $color="#303030" />
                <CopyrightRow>
                  <label htmlFor="copyright">Check copyright?</label>
                  <Icon w={11} h={11} weight={1}><circle cx="5.500" cy="5.500" r="4.900" /><path d="M4 4.500c0-2 3-2 3-.2 0 1.200-1.500 1.100-1.500 2.300M5.500 7.500v1" /></Icon>
                  <Toggle id="copyright" type="checkbox" role="switch" />
                </CopyrightRow>
                <ScrollThumb />
              </Settings>
            </Form>
          </DialogBody>
          <DialogFoot>
            <Film w={18} h={15} />
            <Summary>Duration: 3m 47s | Size: about 4 MB</Summary>
            <ActionArea>
              <Action type="button" $primary>Export</Action>
              <Action type="button">Cancel</Action>
              <Pointer $top={-33} $right={155} width="54" height="38" viewBox="0 0 54 38">
                <path d="M2 3 40 28" /><path d="M53 37 35 33 42 23z" stroke="none" />
              </Pointer>
            </ActionArea>
          </DialogFoot>
        </Dialog>
      </Overlay>
    </>
  );
}
